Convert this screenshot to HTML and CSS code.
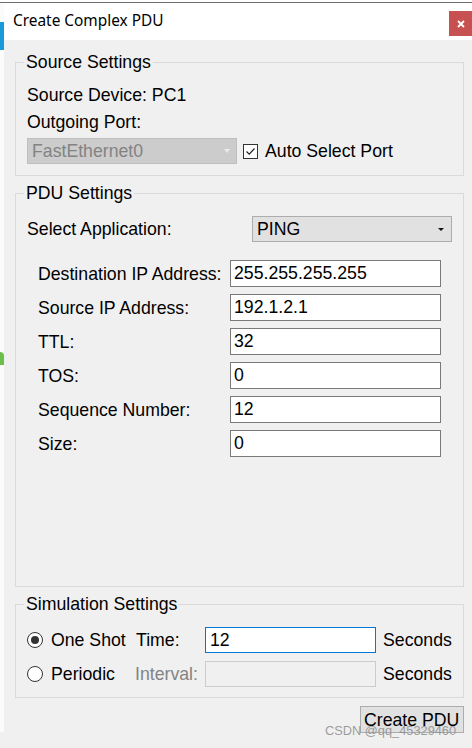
FILE: index.html
```html
<!DOCTYPE html>
<html>
<head>
<meta charset="utf-8">
<link rel="stylesheet" href="styles.css">
</head>
<body>
<div class="screen">
  <div class="topline"></div>
  <div class="main">
    <div class="strip"><div class="blue"></div><div class="green"></div></div>
    <div class="dialog">
      <div class="titlebar">
        <span class="title">Create Complex PDU</span>
        <div class="close"><svg width="8" height="8" viewBox="0 0 8 8"><path d="M1 1L7 7M7 1L1 7" stroke="#fff" stroke-width="1.8" fill="none"/></svg></div>
      </div>
      <div class="content">
        <fieldset class="group g-source">
          <legend>Source Settings</legend>
          <div class="source-body">
            <div class="row-text">Source Device: PC1</div>
            <div class="row-text gap6">Outgoing Port:</div>
            <div class="port-row">
              <div class="combo combo-disabled"><span>FastEthernet0</span><span class="arrow arrow-light"></span></div>
              <div class="checkbox"><svg width="13" height="13" viewBox="0 0 13 13"><path d="M2.5 6.5L5.2 9.2L10.5 3.5" stroke="#222" stroke-width="1.2" fill="none"/></svg></div>
              <span class="check-label">Auto Select Port</span>
            </div>
          </div>
        </fieldset>
        <fieldset class="group g-pdu">
          <legend>PDU Settings</legend>
          <div class="pdu-body">
            <div class="app-row">
              <span class="app-label">Select Application:</span>
              <div class="combo combo-app"><span>PING</span><span class="arrow arrow-dark"></span></div>
            </div>
            <div class="fields">
              <span class="f-label">Destination IP Address:</span><div class="input">255.255.255.255</div>
              <span class="f-label">Source IP Address:</span><div class="input">192.1.2.1</div>
              <span class="f-label">TTL:</span><div class="input">32</div>
              <span class="f-label">TOS:</span><div class="input">0</div>
              <span class="f-label">Sequence Number:</span><div class="input">12</div>
              <span class="f-label">Size:</span><div class="input">0</div>
            </div>
          </div>
        </fieldset>
        <fieldset class="group g-sim">
          <legend>Simulation Settings</legend>
          <div class="sim-body">
            <span class="radio checked"><span class="dot"></span></span>
            <span class="s-text">One Shot</span>
            <span class="s-text">Time:</span>
            <div class="input input-focus">12</div>
            <span class="s-text s-sec">Seconds</span>

            <span class="radio"></span>
            <span class="s-text">Periodic</span>
            <span class="s-text s-gray">Interval:</span>
            <div class="input input-disabled"></div>
            <span class="s-text s-sec">Seconds</span>
          </div>
        </fieldset>
        <div class="button">Create PDU</div>
      </div>
    </div>
  </div>
  <div class="watermark">CSDN @qq_45329460</div>
</div>
</body>
</html>
```
FILE: styles.css
```css
html, body {
  margin: 0;
  padding: 0;
}
body {
  width: 472px;
  height: 748px;
  overflow: hidden;
  background: #f0f0f0;
  font-family: "Liberation Sans", Arial, sans-serif;
  font-size: 17.7px;
  color: #000;
}
.screen {
  position: relative;
  width: 472px;
  height: 748px;
  background: #f0f0f0;
}
.topline {
  height: 2px;
  background: #fff;
  border-bottom: 1px solid #6e6e6e;
}
.main {
  display: flex;
  align-items: flex-start;
  height: 745px;
}
.strip {
  width: 4px;
  height: 729px;
  background: #fbfbfb;
  display: flex;
  flex-direction: column;
  flex-shrink: 0;
}
.blue {
  margin-top: 19px;
  height: 28px;
  background: #1a9ad9;
}
.green {
  margin-top: 302px;
  height: 13px;
  background: #6cbf4a;
  border-top-right-radius: 4px;
}
.dialog {
  flex: 1;
  height: 745px;
  display: flex;
  flex-direction: column;
}
.titlebar {
  height: 37px;
  background: #fff;
  display: flex;
  justify-content: space-between;
  align-items: flex-start;
  flex-shrink: 0;
}
.title {
  font-family: "Noto Sans", "Open Sans", sans-serif;
  font-size: 15.4px;
  line-height: 36px;
  padding-left: 9px;
  color: #000;
}
.close {
  margin-top: 8px;
  width: 23px;
  height: 25px;
  background: #c75050;
  display: flex;
  align-items: center;
  justify-content: center;
}
.content {
  flex: 1;
  display: flex;
  flex-direction: column;
  padding: 12px 8px 15px 11px;
}
.group {
  margin: 0;
  padding: 0;
  border: 1px solid #dadada;
  min-width: 0;
}
.group legend {
  margin-left: 8px;
  padding: 0 2px;
  line-height: 20px;
}
.g-pdu {
  flex: 1;
  margin-top: 7px;
}
.g-sim {
  margin-top: 7px;
  flex-shrink: 0;
}
.g-source {
  flex-shrink: 0;
}
.source-body {
  padding: 13px 0 11px 11px;
}
.row-text {
  line-height: 20px;
}
.gap6 {
  margin-top: 7px;
}
.port-row {
  margin-top: 6px;
  display: flex;
  align-items: center;
  height: 26px;
}
.combo {
  box-sizing: border-box;
  height: 26px;
  display: flex;
  align-items: center;
  justify-content: space-between;
  padding: 0 6px 0 4px;
  line-height: 20px;
}
.combo-disabled {
  width: 210px;
  background: #cccccc;
  border: 1px solid #bfbfbf;
  color: #838383;
}
.arrow {
  width: 0;
  height: 0;
  border-left: 3.5px solid transparent;
  border-right: 3.5px solid transparent;
}
.arrow-light {
  border-top: 4px solid #ececec;
  margin-right: 0;
}
.arrow-dark {
  border-top: 3px solid #111;
  margin-right: 1px;
}
.checkbox {
  box-sizing: border-box;
  margin-left: 6px;
  width: 15px;
  height: 15px;
  border: 1px solid #333;
  background: #fff;
  display: flex;
  align-items: center;
  justify-content: center;
}
.check-label {
  margin-left: 7px;
  line-height: 20px;
}
.pdu-body {
  padding: 13px 0 0 11px;
}
.app-row {
  display: flex;
  align-items: center;
}
.app-label {
  width: 225px;
  line-height: 20px;
}
.combo-app {
  width: 200px;
  background: #e1e1e1;
  border: 1px solid #adadad;
}
.fields {
  margin-top: 18px;
  padding-left: 11px;
  display: grid;
  grid-template-columns: 192px 211px;
  grid-auto-rows: 27px;
  row-gap: 7px;
  align-items: center;
}
.f-label {
  line-height: 20px;
}
.input {
  box-sizing: border-box;
  height: 27px;
  background: #fff;
  border: 1px solid #7a7a7a;
  padding: 0 3px;
  line-height: 25px;
}
.sim-body {
  padding: 13px 0 10px 11px;
  display: grid;
  grid-template-columns: 24px 85px 69px 171px auto;
  grid-auto-rows: 26px;
  row-gap: 8px;
  align-items: center;
}
.sim-body .input {
  height: 26px;
  line-height: 24px;
  padding: 0 4px;
}
.input-focus {
  border-color: #0078d7;
}
.input-disabled {
  background: #f0f0f0;
  border-color: #cccccc;
}
.s-text {
  line-height: 20px;
  white-space: nowrap;
}
.s-gray {
  color: #838383;
  margin-left: -1px;
}
.s-sec {
  padding-left: 7px;
}
.radio {
  box-sizing: border-box;
  width: 16px;
  height: 16px;
  border: 1px solid #333;
  border-radius: 50%;
  background: #fff;
  display: flex;
  align-items: center;
  justify-content: center;
}
.dot {
  width: 8px;
  height: 8px;
  border-radius: 50%;
  background: #333;
}
.button {
  margin-top: 8px;
  align-self: flex-end;
  box-sizing: border-box;
  width: 104px;
  height: 27px;
  background: #e1e1e1;
  border: 1px solid #adadad;
  padding-left: 3px;
  line-height: 27px;
  white-space: nowrap;
  overflow: hidden;
  flex-shrink: 0;
}
.watermark {
  position: absolute;
  left: 325px;
  top: 723px;
  font-size: 12.8px;
  line-height: 16px;
  color: rgba(140, 140, 140, 0.85);
  white-space: nowrap;
}
```
